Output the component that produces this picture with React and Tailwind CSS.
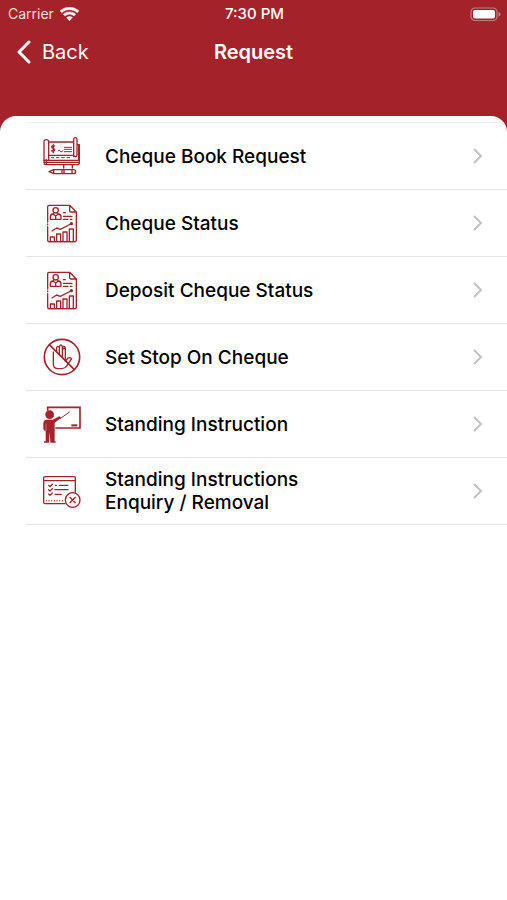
import React from 'react';

const iconClass = 'h-10 w-10 shrink-0 text-[#a4232b]';

function ChequeBookIcon() {
  return (
    <svg viewBox="36 33 120 120" className={iconClass} fill="none" stroke="currentColor" strokeWidth="4" strokeLinejoin="round" strokeLinecap="round" aria-hidden="true">
      <path d="M56 51h74M42 106V50q0-6 7-6t7 6v56M42 106h104V59h-5M131 94V43q0-5 5-5t5 5v47q0 5-5 5t-5-4H57" />
      <path d="M42 106v8q0 5 5 5h95q6 0 6-6V59M43 112h104M49 104v13" />
      <path d="M74 63q-7-3-9 2 0 4 5 5 5 2 4 6-3 5-9 1M70 59v24" />
      <path d="M84 78q4-5 6 0t9 0M103 67h22M103 73h22M103 80h22" strokeWidth="3" />
      <path d="M64 98h7M79 98h8M95 98h8M111 98h8" strokeWidth="3" />
      <path d="M101 119v10M127 119v10" />
      <path d="M57 140l14-6h60q6 0 6 6t-6 6H71zM71 134v12M96 134v12M102 134v12M126 134v12" />
    </svg>
  );
}

function ReportIcon() {
  return (
    <svg viewBox="36 31 120 120" className={iconClass} fill="none" stroke="currentColor" strokeWidth="4" strokeLinejoin="round" strokeLinecap="round" aria-hidden="true">
      <path d="M53 88V42q0-4 4-4h62l20 20v85q0 4-4 4H57q-4 0-4-4v-41M53 94v2M119 38v16q0 4 4 4h16" />
      <circle cx="77" cy="53" r="8" />
      <path d="M61 80V72q0-7 8-8l8 6 8-6q8 1 8 8v8zM71 62v4M83 62v4M77 70v9" />
      <path d="M100 60h6M100 71h26M100 80h14M121 80h5" />
      <path d="M66 115l14-9 11 4 31-16" />
      <circle cx="124" cy="93" r="3" fill="currentColor" />
      <path d="M61 147v-14h12v14M80 147v-23h12v23M99 147v-29h12v29M118 147v-38h12v38M56 147h80" />
    </svg>
  );
}

function StopIcon() {
  return (
    <svg viewBox="36 33 120 120" className={iconClass} fill="none" stroke="currentColor" strokeWidth="5" strokeLinejoin="round" strokeLinecap="round" aria-hidden="true">
      <circle cx="96" cy="93" r="53" />
      <path d="M58 56l75 75" />
      <path d="M70 82v31q0 15 15 15h11q9 0 14-8l15-22q-6-6-12-1l-7 9V70q-4-6-8 0M70 86V78M80 74V64q4-6 8 0v22M88 63q4-11 9-2v31M97 65q4-7 9 0v31" strokeWidth="4" />
    </svg>
  );
}

function PresenterIcon() {
  return (
    <svg viewBox="36 33 120 120" className={iconClass} fill="none" stroke="currentColor" strokeWidth="5" aria-hidden="true">
      <path d="M53 53V43h97v62H76" />
      <path d="M124 97h18" strokeWidth="6" />
      <path d="M90 77l29-20" strokeWidth="3" />
      <circle cx="59" cy="65" r="13" fill="currentColor" stroke="none" />
      <path d="M50 80h18l20-10q6 2 4 6l-18 13v56h3v4H61v-4l-2-27-2 27v4H42v-4h5v-31q-7-2-7-7V91q0-10 10-11z" fill="currentColor" stroke="none" />
      <path d="M48 92v22" stroke="white" strokeWidth="1" />
    </svg>
  );
}

function ChecklistIcon() {
  return (
    <svg viewBox="36 33 120 120" className={iconClass} fill="none" stroke="currentColor" strokeWidth="3" strokeLinejoin="round" strokeLinecap="round" aria-hidden="true">
      <path d="M105 131H45q-4 0-4-4V54q0-4 4-4h87q4 0 4 4v42M41 62h95" strokeWidth="4" />
      <path d="M56 76l4 4 7-7M56 89l4 4 7-7M56 102l4 4 7-7" strokeWidth="4" />
      <path d="M76 76h3M88 76h26M75 89h39M75 103h19" strokeWidth="4" />
      <path d="M49 121v2M57 121v2M65 121v2M73 121v2M81 121v2M89 121v2M97 121v2" />
      <circle cx="128" cy="120" r="22" strokeWidth="4" />
      <path d="M120 112l16 16M136 112l-16 16" strokeWidth="4" />
    </svg>
  );
}

const items = [
  { label: 'Cheque Book Request', Icon: ChequeBookIcon },
  { label: 'Cheque Status', Icon: ReportIcon },
  { label: 'Deposit Cheque Status', Icon: ReportIcon },
  { label: 'Set Stop On Cheque', Icon: StopIcon },
  { label: 'Standing Instruction', Icon: PresenterIcon },
  { label: 'Standing Instructions Enquiry / Removal', Icon: ChecklistIcon },
];

function StatusBar() {
  return (
    <div className="grid h-7 grid-cols-[1fr_auto_1fr] items-center pl-2 pr-1.5 text-[15px]">
      <div className="flex items-center gap-1.5 text-[#f9dcdc]">
        <span className="text-sm">Carrier</span>
        <svg viewBox="0 0 18 13" className="h-[14px] w-[19px]" fill="white" stroke="white" strokeWidth="0.4" aria-hidden="true">
          <path d="M9 0C5.500 0 2.300 1.300 0 3.500l1.700 1.700C3.600 3.400 6.100 2.400 9 2.400s5.400 1 7.300 2.800L18 3.500C15.700 1.300 12.500 0 9 0z" />
          <path d="M9 4.500c-2.300 0-4.300.8-5.900 2.200l1.700 1.700C6 7.400 7.400 6.800 9 6.800s3 .6 4.200 1.600l1.700-1.700C13.300 5.300 11.300 4.500 9 4.500z" />
          <path d="M9 8.900c-1.100 0-2 .4-2.800 1L9 13l2.800-3.100c-.8-.6-1.700-1-2.800-1z" />
        </svg>
      </div>
      <span className="font-medium">7:30 PM</span>
      <svg viewBox="0 0 31 15" className="h-[15px] w-[31px] justify-self-end" fill="none" aria-hidden="true">
        <rect x="1" y="1" width="26" height="12.500" rx="4" stroke="white" strokeOpacity="0.4" strokeWidth="1.200" />
        <rect x="3" y="3" width="22" height="8.500" rx="2" fill="white" />
        <path d="M28.500 5q2 .6 2 2.300t-2 2.300z" fill="white" fillOpacity="0.4" />
      </svg>
    </div>
  );
}

function App() {
  return (
    <div className="flex min-h-screen flex-col bg-[#a4232b] font-[Inter,sans-serif] text-white">
      <StatusBar />
      <header className="mb-10 grid h-12 grid-cols-[1fr_auto_1fr] items-center px-4">
        <button type="button" className="flex items-center gap-2.5 justify-self-start text-xl">
          <svg viewBox="0 0 16 24" className="h-6 w-4" fill="none" stroke="currentColor" strokeWidth="3" strokeLinecap="round" strokeLinejoin="round" aria-hidden="true">
            <path d="M13 2L3 12l10 10" />
          </svg>
          Back
        </button>
        <h1 className="text-xl font-semibold">Request</h1>
      </header>

      <main className="flex-1 overflow-hidden rounded-t-2xl bg-white pt-1.5 text-black">
        <ul className="ml-[26px] border-t border-[#efefef]">
          {items.map(({ label, Icon }) => (
            <li key={label} className="border-b border-[#e6e6e6]">
              <button type="button" className="flex min-h-[66px] w-full items-center pl-4 pr-6 text-left">
                <Icon />
                <span className="ml-[23px] max-w-56 text-[19px]/[23px] font-medium">{label}</span>
                <svg viewBox="0 0 10 16" className="ml-auto h-4 w-2.5 shrink-0" fill="none" stroke="#c2c2c4" strokeWidth="2" aria-hidden="true">
                  <path d="M1 1l7 7-7 7" />
                </svg>
              </button>
            </li>
          ))}
        </ul>
      </main>
    </div>
  );
}

export default App;
